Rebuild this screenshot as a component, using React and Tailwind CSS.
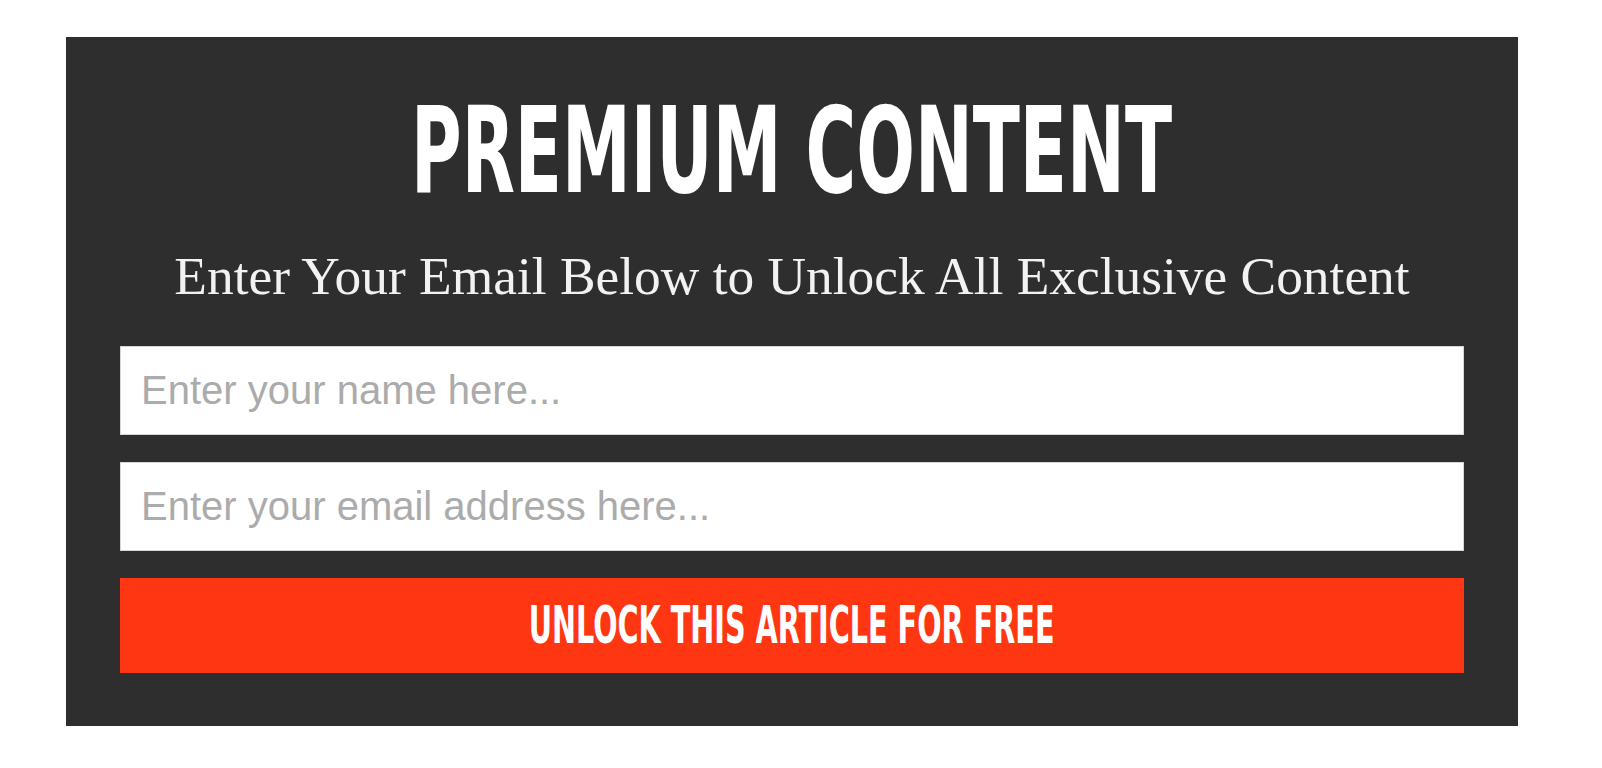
import React from 'react';

const narrow = { fontFamily: '"Liberation Sans Narrow", "DejaVu Sans Condensed", "Liberation Sans", sans-serif' };

export default function App() {
  return (
    <div className="min-h-screen bg-white pt-[37px] pl-[66px]">
      <div className="w-[1452px] bg-[#2e2e2e] px-[54px] pt-[54px] pb-[53px]">
        {/* Titulo */}
        <h1 className="text-center text-white leading-none text-[120px] font-bold" style={narrow}>
          <span className="inline-block scale-x-[0.64]">PREMIUM CONTENT</span>
        </h1>
        <p className="mt-[39px] text-center text-[#f2f2f2] text-[53.4px] leading-none font-['Liberation_Serif',serif]">
          Enter Your Email Below to Unlock All Exclusive Content
        </p>

        {/* Formulario */}
        <form className="mt-[43px] flex flex-col gap-[27px]" onSubmit={e => e.preventDefault()}>
          <input
            type="text"
            placeholder="Enter your name here..."
            className="h-[89px] w-full bg-white border border-[#d6d6d6] pl-[20px] text-[40px] text-[#333] placeholder:text-[#ababab] outline-none font-['Liberation_Sans',sans-serif]"
          />
          <input
            type="email"
            placeholder="Enter your email address here..."
            className="h-[89px] w-full bg-white border border-[#d6d6d6] pl-[20px] text-[40px] text-[#333] placeholder:text-[#ababab] outline-none font-['Liberation_Sans',sans-serif]"
          />
          <button type="submit" className="h-[95px] w-full bg-[#ff3612] text-white text-[51px] font-bold leading-none" style={narrow}>
            <span className="inline-block scale-x-[0.625]">UNLOCK THIS ARTICLE FOR FREE</span>
          </button>
        </form>
      </div>
    </div>
  );
}
